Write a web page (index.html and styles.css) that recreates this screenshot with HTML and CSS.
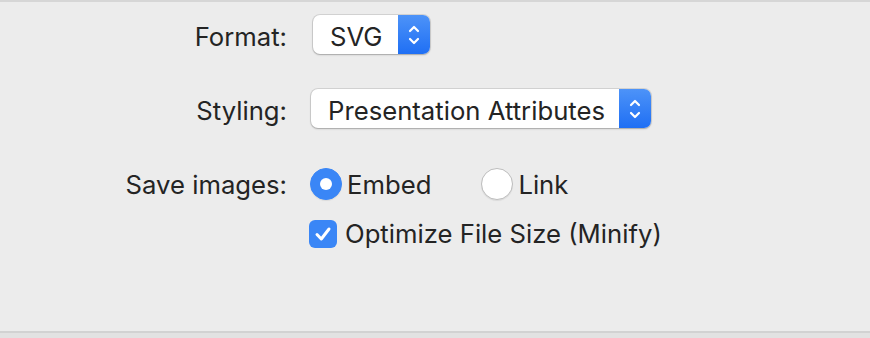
FILE: index.html
```html
<!DOCTYPE html>
<html lang="en">
<head>
    <meta charset="UTF-8">
    <title>Export Options</title>
    <link rel="stylesheet" href="styles.css">
</head>
<body>
    <div class="sheet">
        <div class="row row-format">
            <span class="label">Format:</span>
            <div class="popup popup-format">
                <span class="popup-value">SVG</span>
                <span class="stepper">
                    <svg width="14" height="24" viewBox="0 0 14 24"><path d="M3 8 L7 4 L11 8 M3 16 L7 20 L11 16" fill="none" stroke="#fff" stroke-width="2.2" stroke-linecap="round" stroke-linejoin="round"/></svg>
                </span>
            </div>
        </div>

        <div class="row row-styling">
            <span class="label">Styling:</span>
            <div class="popup popup-styling">
                <span class="popup-value">Presentation Attributes</span>
                <span class="stepper">
                    <svg width="14" height="24" viewBox="0 0 14 24"><path d="M3 8 L7 4 L11 8 M3 16 L7 20 L11 16" fill="none" stroke="#fff" stroke-width="2.2" stroke-linecap="round" stroke-linejoin="round"/></svg>
                </span>
            </div>
        </div>

        <div class="row row-images">
            <span class="label">Save images:</span>
            <div class="choices">
                <span class="choice choice-embed"><span class="radio radio-on"></span>Embed</span>
                <span class="choice"><span class="radio"></span>Link</span>
            </div>
        </div>

        <div class="row row-minify">
            <span class="label"></span>
            <span class="choice choice-check">
                <span class="checkbox">
                    <svg width="28" height="28" viewBox="0 0 28 28"><path d="M8 14.5 L12.3 19 L20 9" fill="none" stroke="#fff" stroke-width="3" stroke-linecap="round" stroke-linejoin="round"/></svg>
                </span>
                Optimize File Size (Minify)
            </span>
        </div>
    </div>
    <div class="strip"></div>
</body>
</html>
```

FILE: styles.css
```css
body {
    margin: 0;
    background-color: #ececec;
    font-family: Inter, "Liberation Sans", sans-serif;
    font-size: 25.7px;
    color: #242424;
}
.sheet {
    height: 329px;
    border-top: 2px solid #d6d6d6;
    border-bottom: 2px solid #d2d2d2;
    box-sizing: content-box;
}
.strip {
    height: 5px;
    background: #e2e2e2;
}
.row {
    display: flex;
    align-items: baseline;
}
.label {
    width: 287px;
    text-align: right;
    flex-shrink: 0;
}
.row-format {
    margin-top: 13px;
}
.row-styling {
    margin-top: 35px;
}
.row-images {
    align-items: center;
    margin-top: 40px;
}
.row-minify {
    align-items: center;
    margin-top: 18px;
}
.popup {
    display: flex;
    align-items: stretch;
    height: 39px;
    background: #ffffff;
    border-radius: 7px;
    box-shadow: 0 0 0 1px rgba(0, 0, 0, 0.1), 0 1px 2px rgba(0, 0, 0, 0.22);
}
.popup-format {
    margin-left: 26px;
}
.popup-styling {
    margin-left: 24px;
}
.popup-value {
    padding: 4px 15px 0 17px;
    line-height: 35px;
}
.popup-styling .popup-value {
    padding-right: 14px;
}
.stepper {
    width: 32px;
    display: flex;
    align-items: center;
    justify-content: center;
    border-radius: 0 7px 7px 0;
    background: linear-gradient(#4d93f8, #1f6ff4);
}
.choices {
    display: flex;
    margin-left: 23px;
}
.choice {
    display: flex;
    align-items: center;
}
.choice-embed {
    margin-right: 50px;
}
.radio {
    width: 32px;
    height: 32px;
    margin-right: 5px;
    border-radius: 50%;
    box-sizing: border-box;
    background: #ffffff;
    border: 1px solid #bdbdbd;
    box-shadow: 0 1px 1px rgba(0, 0, 0, 0.08);
    position: relative;
}
.radio-on {
    background: #3a86f6;
    border-color: #3a86f6;
}
.radio-on::after {
    content: "";
    position: absolute;
    left: 9px;
    top: 9px;
    width: 12px;
    height: 12px;
    border-radius: 50%;
    background: #ffffff;
}
.choice-check {
    margin-left: 22px;
}
.checkbox {
    width: 28px;
    height: 28px;
    margin-right: 8px;
    border-radius: 6px;
    background: #3a86f6;
    display: flex;
}
```
